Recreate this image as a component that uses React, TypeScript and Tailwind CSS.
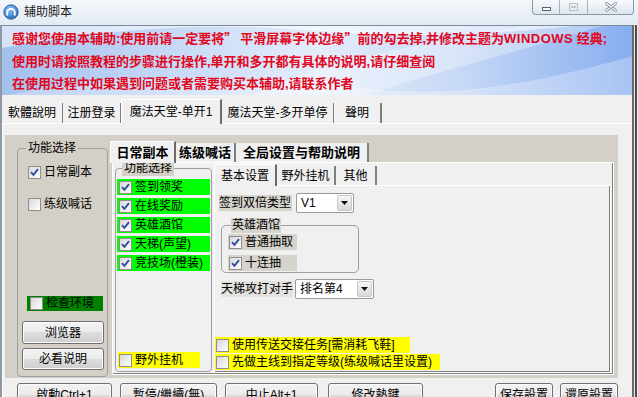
import type React from "react";

// small win32-ish widgets
function Check({ on }: { on?: boolean }) {
  return (
    <span className="w-[13px] h-[13px] shrink-0 border border-[#8f8f8f] bg-[linear-gradient(135deg,#d8d8d8,#ffffff)] flex items-center justify-center">
      {on && (
        <svg width="9" height="9" viewBox="0 0 9 9">
          <path d="M1 4.2 L3.4 6.8 L8 1.2" fill="none" stroke="#2d4a9b" strokeWidth="1.9" />
        </svg>
      )}
    </span>
  );
}

function CheckRow({ on, label, className }: { on?: boolean; label: string; className?: string }) {
  return (
    <div className={"flex items-center gap-[3px] h-[16px] shrink-0 " + (className ?? "")}>
      <Check on={on} />
      <span className="leading-[16px] whitespace-nowrap">{label}</span>
    </div>
  );
}

function Combo({ value, className }: { value: string; className?: string }) {
  return (
    <div className={"flex items-center h-[20px] border border-[#9a9a9a] rounded-[2px] bg-white pl-[4px] " + (className ?? "")}>
      <span className="flex-1 leading-[16px] whitespace-nowrap">{value}</span>
      <span className="w-[15px] h-[16px] mr-[1px] rounded-[2px] bg-gradient-to-b from-[#f6f6f6] to-[#d9d9d9] border border-[#c8c8c8] flex items-center justify-center">
        <svg width="7" height="4" viewBox="0 0 7 4">
          <path d="M0 0h7L3.5 4z" fill="#111" />
        </svg>
      </span>
    </div>
  );
}

function Btn({ children, className }: { children: React.ReactNode; className?: string }) {
  return (
    <div
      className={
        "flex items-center justify-center shrink-0 whitespace-nowrap rounded-[3px] border border-[#707070] bg-[linear-gradient(#f3f3f3_0%,#ebebeb_50%,#dddddd_50%,#cfcfcf_100%)] shadow-[inset_0_0_0_1px_#fcfcfc] " +
        (className ?? "")
      }
    >
      {children}
    </div>
  );
}

const App = () => {
  return (
    <div className="w-[638px] h-[397px] overflow-hidden bg-[#e9eef5] text-[12px] text-black font-['Liberation_Sans','Noto_Sans_CJK_SC',sans-serif]">
      {/* title bar */}
      <div className="h-[25px] flex justify-between bg-gradient-to-b from-[#f4f7fb] to-[#e3eaf3]">
        <div className="flex items-center gap-[5px] pl-[3px] pb-[2px]">
          <svg width="16" height="16" viewBox="0 0 16 16">
            <defs>
              <radialGradient id="ic" cx="0.4" cy="0.3" r="0.8">
                <stop offset="0" stopColor="#8fc4f5" />
                <stop offset="1" stopColor="#1f63b8" />
              </radialGradient>
            </defs>
            <circle cx="8" cy="8" r="7.2" fill="url(#ic)" stroke="#1a4f92" strokeWidth="0.8" />
            <path d="M4.2 11.5 V8.6 A3.8 3.8 0 0 1 11.8 8.6 V11.5" fill="none" stroke="#fff" strokeWidth="1.8" />
          </svg>
          <span className="text-[12px] leading-[14px] text-[#1b1b1b]">辅助脚本</span>
        </div>
        <div className="self-start mr-[4px] h-[15px] flex border border-t-0 border-[#8c97a6] rounded-b-[4px] bg-gradient-to-b from-[#f7f9fc] to-[#dfe6ef]">
          <div className="w-[27px] flex items-center justify-center border-r border-[#a9b3c0]">
            <span className="w-[9px] h-[4px] mt-[4px] border border-[#5a6270] bg-white" />
          </div>
          <div className="w-[28px] flex items-center justify-center border-r border-[#a9b3c0]">
            <span className="w-[9px] h-[8px] border border-[#b8bec8] flex items-center justify-center">
              <span className="w-[5px] h-[2px] border border-[#c4c9d1]" />
            </span>
          </div>
          <div className="w-[45px] flex items-center justify-center">
            <svg width="12" height="10" viewBox="0 0 12 10">
              <path d="M1 1 L11 9 M11 1 L1 9" stroke="#8b93a0" strokeWidth="3" strokeLinecap="round" />
              <path d="M1 1 L11 9 M11 1 L1 9" stroke="#f4f6f9" strokeWidth="1.4" strokeLinecap="round" />
            </svg>
          </div>
        </div>
      </div>

      {/* body */}
      <div className="flex h-[372px] overflow-hidden">
        <div className="w-[2px] bg-[#8e99a6]" />
        <div className="w-[630px] flex flex-col bg-[#f0f0f0]">
          {/* banner */}
          <div className="relative shrink-0 h-[70px] border-t border-[#7f8a99] bg-[linear-gradient(90deg,#a4c0ee_0%,#c3d7f5_25%,#e4edfa_50%,#c9daf6_72%,#87adef_100%)] overflow-hidden">
            <svg className="absolute inset-0" width="631" height="70" viewBox="0 0 631 70">
              <path d="M0 22 C120 0 220 -4 330 6 C430 14 520 6 631 -6 L631 0 L0 0 Z" fill="#ffffff" opacity="0.55" />
              <path d="M0 70 C150 40 260 52 380 64 C470 72 560 50 631 30 L631 70 Z" fill="#ffffff" opacity="0.28" />
              <path d="M250 70 C330 30 420 20 520 0 L600 0 C500 30 420 50 360 70 Z" fill="#ffffff" opacity="0.3" />
            </svg>
            <div className="relative pl-[10px] pt-[1px] text-[13px] leading-[22.5px] font-bold text-[#e2061d] whitespace-nowrap">
              <div>
                感谢您使用本辅助:使用前请一定要将<span className="font-['Noto_Sans_CJK_SC'] mr-[3px]">”</span>平滑屏幕字体边缘
                <span className="font-['Noto_Sans_CJK_SC']">”</span>前的勾去掉,并修改主题为<span className="tracking-[0.5px]">WINDOWS</span> 经典;
              </div>
              <div>使用时请按照教程的步骤进行操作,单开和多开都有具体的说明,请仔细查阅</div>
              <div>在使用过程中如果遇到问题或者需要购买本辅助,请联系作者</div>
            </div>
          </div>

          {/* main tabs */}
          <div className="flex items-end h-[28px] shrink-0">
            <div className="w-[61px] h-[20px] flex items-center justify-center border-r border-[#808080]">軟體說明</div>
            <div className="w-[58px] h-[20px] flex items-center justify-center border-r border-[#808080]">注册登录</div>
            <div className="relative z-10 -mb-px w-[101px] h-[25px] pb-px flex items-center justify-center bg-[#f0f0f0] border-t border-l border-white border-r-2 border-r-[#6a6a6a]">
              魔法天堂-单开1
            </div>
            <div className="w-[112px] h-[20px] flex items-center justify-center border-r border-[#808080]">魔法天堂-多开单停</div>
            <div className="w-[48px] h-[20px] flex items-center justify-center border-r-2 border-[#808080]">聲明</div>
          </div>

          {/* main panel */}
          <div className="shrink-0 h-[280px] border-t border-l border-white flex flex-col">
            <div className="shrink-0 ml-[2px] mt-[11px] w-[613px] h-[243px] bg-[#d4d0c8] flex items-start">
              {/* left group */}
              <div className="relative ml-[12px] mt-[13px] w-[91px] h-[229px] border border-[#9f9f9f] rounded-[4px] flex flex-col pt-[15px]">
                <span className="absolute left-[8px] top-[-8px] px-[2px] leading-[14px] bg-[#d4d0c8]">功能选择</span>
                <CheckRow on label="日常副本" className="ml-[10px]" />
                <CheckRow label="练级喊话" className="ml-[10px] mt-[16px]" />
                <div className="mt-auto ml-[9px] w-[76px] h-[15px] bg-[#008000] flex items-center gap-[3px] pl-[3px]">
                  <Check />
                  <span className="leading-[15px]">检查环境</span>
                </div>
                <Btn className="ml-[4px] mt-[10px] w-[82px] h-[23px]">浏览器</Btn>
                <Btn className="ml-[4px] mt-[4px] mb-[6px] w-[82px] h-[22px]">必看说明</Btn>
              </div>

              {/* middle tab control */}
              <div className="ml-[4px] mt-[6px] w-[502px] flex flex-col">
                <div className="flex items-end h-[21px] text-[13px] font-bold">
                  <div className="relative z-10 -ml-[2px] -mb-px w-[66px] h-[22px] flex items-center justify-center bg-[#f0f0f0] border-t border-l border-white border-r-2 border-r-[#6a6a6a]">
                    日常副本
                  </div>
                  <div className="w-[60px] h-[19px] flex items-center justify-center bg-[#f0f0f0] border-r-2 border-[#808080]">练级喊话</div>
                  <div className="w-[133px] h-[19px] flex items-center justify-center bg-[#f0f0f0] border-r-2 border-[#808080]">全局设置与帮助说明</div>
                </div>
                <div className="h-[213px] bg-[#f0f0f0] border-t border-l border-white border-r border-b border-[#404040] shadow-[inset_-1px_-1px_0_#808080] flex items-start">
                  {/* inner group */}
                  <div className="relative ml-[2px] mt-[5px] w-[97px] h-[204px] border border-[#a0a0a0] rounded-[4px] flex flex-col pt-[10px]">
                    <span className="absolute left-[6px] top-[-8px] px-[2px] leading-[15px] bg-[#d4d0c8]">功能选择</span>
                    <div className="flex flex-col gap-[3px] ml-[1px]">
                      <CheckRow on label="签到领奖" className="w-[93px] bg-[#00ff00] pl-[2px]" />
                      <CheckRow on label="在线奖励" className="w-[93px] bg-[#00ff00] pl-[2px]" />
                      <CheckRow on label="英雄酒馆" className="w-[93px] bg-[#00ff00] pl-[2px]" />
                      <CheckRow on label="天梯(声望)" className="w-[93px] bg-[#00ff00] pl-[2px]" />
                      <CheckRow on label="竞技场(橙装)" className="w-[93px] bg-[#00ff00] pl-[2px]" />
                    </div>
                    <CheckRow label="野外挂机" className="mt-auto mb-[3px] ml-[2px] w-[82px] bg-[#ffff00] pl-[1px]" />
                  </div>

                  {/* nested tab control */}
                  <div className="ml-[2px] mt-[1px] w-[397px] flex flex-col">
                    <div className="flex items-end h-[21px]">
                      <div className="relative z-10 -mb-px w-[63px] h-[22px] flex items-center justify-center bg-[#f0f0f0] border-t border-l border-white border-r-2 border-r-[#6a6a6a]">
                        基本设置
                      </div>
                      <div className="w-[59px] h-[19px] flex items-center justify-center border-r-2 border-[#808080]">野外挂机</div>
                      <div className="w-[41px] h-[19px] flex items-center justify-center border-r-2 border-[#808080]">其他</div>
                    </div>
                    <div className="h-[188px] border-t border-l border-white border-r border-b border-[#404040] shadow-[inset_-1px_-1px_0_#808080] flex flex-col">
                      <div className="mt-[7px] ml-[4px] flex items-center h-[20px]">
                        <span className="w-[73px] h-[16px] leading-[16px] whitespace-nowrap bg-[#d6d3cc]">签到双倍类型</span>
                        <Combo value="V1" className="ml-[4px] w-[58px]" />
                      </div>
                      <div className="relative mt-[12px] ml-[6px] w-[138px] h-[48px] border border-[#a0a0a0] rounded-[5px] flex flex-col gap-[5px] pt-[8px] pl-[6px]">
                        <span className="absolute left-[9px] top-[-8px] px-[1px] leading-[15px] bg-[#d6d3cc]">英雄酒馆</span>
                        <CheckRow on label="普通抽取" className="w-[69px] bg-[#d6d3cc] pl-[1px]" />
                        <CheckRow on label="十连抽" className="w-[69px] bg-[#d6d3cc] pl-[1px]" />
                      </div>
                      <div className="mt-[6px] ml-[6px] flex items-center h-[20px]">
                        <span className="w-[72px] h-[16px] leading-[16px] whitespace-nowrap bg-[#e4e2de]">天梯攻打对手</span>
                        <Combo value="排名第4" className="ml-[2px] w-[79px]" />
                      </div>
                      <div className="mt-[38px] flex flex-col gap-[1px]">
                        <CheckRow label="使用传送交接任务[需消耗飞鞋]" className="w-[195px] bg-[#ffff00] pl-[1px]" />
                        <CheckRow label="先做主线到指定等级(练级喊话里设置)" className="w-[225px] bg-[#ffff00] pl-[1px]" />
                      </div>
                    </div>
                  </div>
                </div>
              </div>
            </div>

            {/* bottom buttons */}
            <div className="flex items-start mt-[5px] pl-[14px]">
              <Btn className="w-[95px] h-[24px]">啟動Ctrl+1</Btn>
              <Btn className="ml-[8px] w-[97px] h-[24px]">暫停/繼續(無)</Btn>
              <Btn className="ml-[8px] w-[93px] h-[24px]">中止Alt+1</Btn>
              <Btn className="ml-[10px] w-[95px] h-[24px]">修改熱鍵</Btn>
              <Btn className="ml-[72px] w-[58px] h-[24px]">保存設置</Btn>
              <Btn className="ml-[7px] w-[58px] h-[24px]">還原設置</Btn>
            </div>
          </div>
        </div>
        <div className="w-[6px] flex">
          <span className="w-[2px] bg-[#6a6a6a]" />
          <span className="w-[1px] bg-[#e6e6e6]" />
          <span className="w-[2px] bg-[#4d4d4d]" />
          <span className="w-[1px] bg-[#e9eef5]" />
        </div>
      </div>
    </div>
  );
};

export default App;
